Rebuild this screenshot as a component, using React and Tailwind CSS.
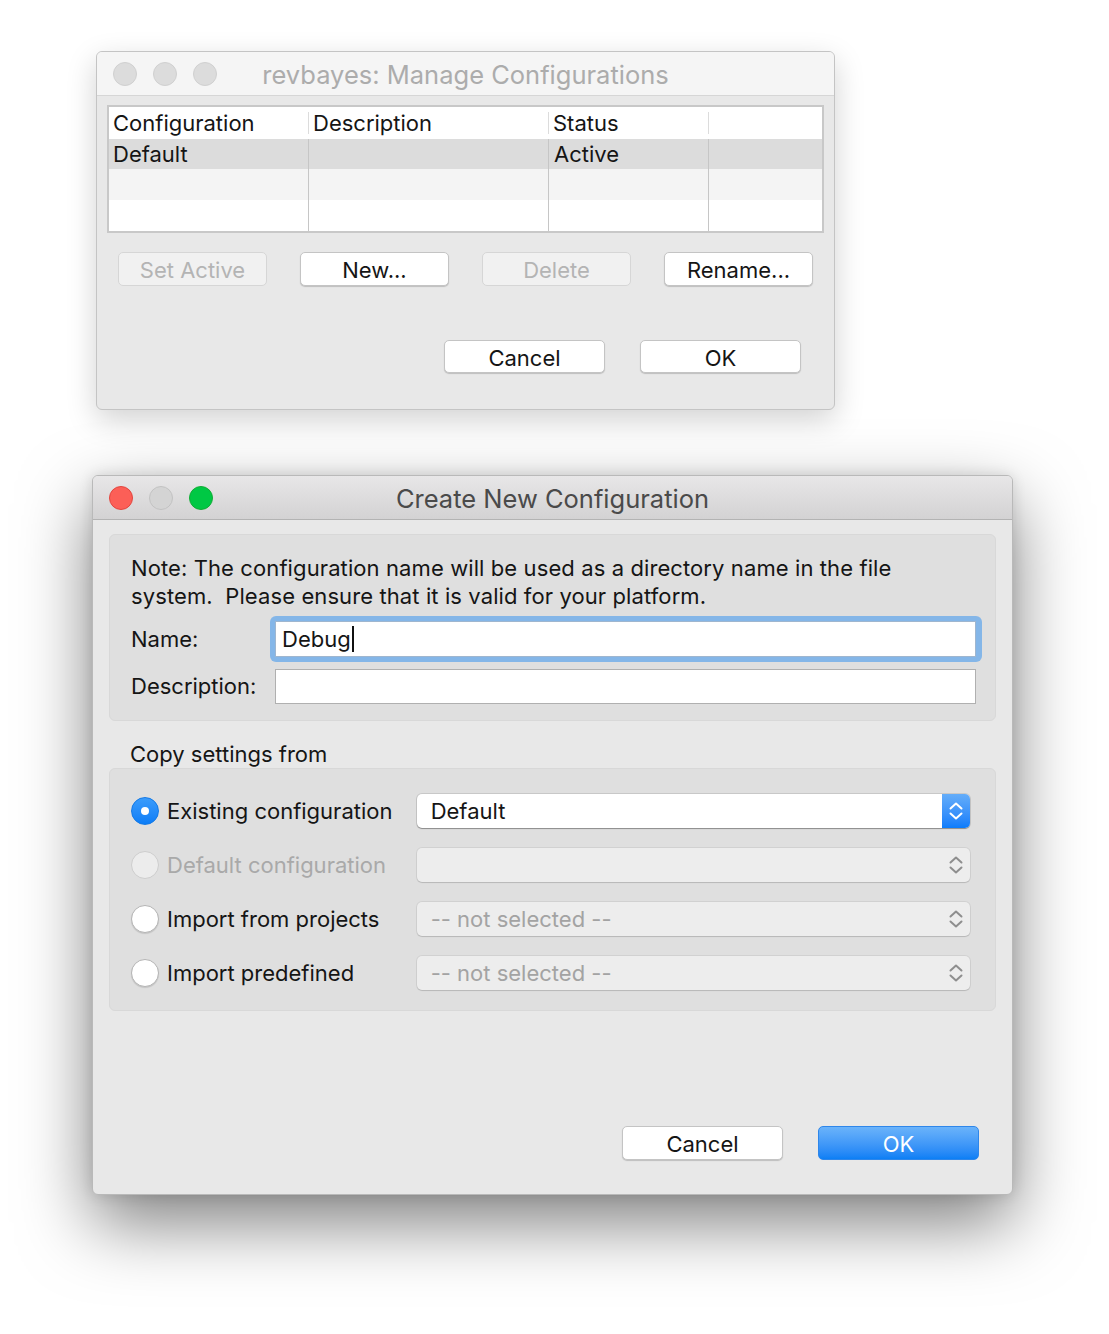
import React from "react";

const Chevrons = ({ color }) => (
  <svg width="14" height="20" viewBox="0 0 14 20" fill="none" stroke={color} strokeWidth="2" strokeLinecap="round" strokeLinejoin="round">
    <path d="M1.5 7.5 L7 2.5 L12.5 7.5" />
    <path d="M1.5 12.5 L7 17.5 L12.5 12.5" />
  </svg>
);

const Btn = ({ children, disabled, w = "w-[149px]", h = "h-[34px]" }) => (
  <div
    className={
      (disabled
        ? "bg-[#f1f1f1] text-[#b4b4b4] border-[#d6d6d6] "
        : "bg-white text-[#151515] border-[#c4c4c4] shadow-[0_1px_1px_rgba(0,0,0,0.18)] ") +
      w + " " + h +
      " flex items-center justify-center rounded-[5px] border text-[22px] leading-none pt-[2px]"
    }
  >
    {children}
  </div>
);

const Light = ({ cls }) => <div className={"w-[24px] h-[24px] rounded-full border " + cls} />;

const Radio = ({ state }) => {
  if (state === "on")
    return (
      <div className="w-[28px] h-[28px] rounded-full bg-gradient-to-b from-[#3a9cfb] to-[#0a7df7] border border-[#1379e6] flex items-center justify-center">
        <div className="w-[8px] h-[8px] rounded-full bg-white" />
      </div>
    );
  if (state === "disabled")
    return <div className="w-[28px] h-[28px] rounded-full bg-[#ececec] border border-[#cdcdcd]" />;
  return <div className="w-[28px] h-[28px] rounded-full bg-white border border-[#b4b4b4] shadow-[0_1px_1px_rgba(0,0,0,0.12)]" />;
};

const Select = ({ active, text }) =>
  active ? (
    <div className="w-[554px] h-[34px] flex rounded-[5px] bg-white shadow-[0_1px_1px_rgba(0,0,0,0.3),0_0_0_1px_rgba(0,0,0,0.1)]">
      <div className="flex-1 flex items-center pl-[14px] text-[22px] text-[#151515]">{text}</div>
      <div className="w-[28px] h-full rounded-r-[5px] bg-gradient-to-b from-[#64adf9] to-[#0a7cfb] flex items-center justify-center">
        <Chevrons color="#ffffff" />
      </div>
    </div>
  ) : (
    <div className="w-[554px] h-[34px] flex items-center rounded-[5px] bg-[#ededed] shadow-[0_1px_1px_rgba(0,0,0,0.12),0_0_0_1px_rgba(0,0,0,0.06)]">
      <div className="flex-1 pl-[14px] text-[22px] text-[#a3a3a3]">{text}</div>
      <div className="w-[28px] flex items-center justify-center">
        <Chevrons color="#8e8e8e" />
      </div>
    </div>
  );

export default function App() {
  const cols = ["w-[199px]", "w-[240px]", "w-[160px]", "flex-1"];
  return (
    <div className="w-[1109px] h-[1334px] bg-white pt-[51px] font-['Inter',sans-serif] text-[#151515] overflow-hidden">
      {/* Window 1 */}
      <div className="ml-[96px] w-[739px] h-[359px] rounded-[6px] border border-[#c4c4c4] bg-[#e8e8e8] shadow-[0_10px_30px_rgba(0,0,0,0.18)] overflow-hidden flex flex-col">
        <div className="h-[44px] shrink-0 bg-[#f5f5f5] border-b border-[#d6d6d6] relative flex items-center justify-center">
          <div className="absolute left-[16px] top-[10px] flex gap-[16px]">
            <Light cls="bg-[#dcdcdc] border-[#d0d0d0]" />
            <Light cls="bg-[#dcdcdc] border-[#d0d0d0]" />
            <Light cls="bg-[#dcdcdc] border-[#d0d0d0]" />
          </div>
          <div className="text-[25.5px] text-[#acacac] pt-[3px]">revbayes: Manage Configurations</div>
        </div>
        <div className="pt-[9px] px-[10px] flex flex-col">
          <div className="h-[128px] border-2 border-[#c8c8c8] bg-white flex flex-col">
            <div className="h-[32px] flex bg-white">
              {["Configuration", "Description", "Status", ""].map((t, i) => (
                <div key={i} className={cols[i] + " flex items-center pl-[4px] text-[22px] relative"}>
                  {i > 0 && <div className="absolute left-0 top-[5px] bottom-[5px] w-[1px] bg-[#dcdcdc]" />}
                  <span className={i > 0 ? "pl-[1px]" : ""}>{t}</span>
                </div>
              ))}
            </div>
            {[
              ["bg-[#dcdcdc]", "h-[30px]", ["Default", "", "Active", ""]],
              ["bg-[#f4f4f4]", "h-[31px]", ["", "", "", ""]],
              ["bg-white", "h-[31px]", ["", "", "", ""]],
            ].map(([bg, h, cells], r) => (
              <div key={r} className={"flex " + bg + " " + h}>
                {cells.map((t, i) => (
                  <div
                    key={i}
                    className={cols[i] + " flex items-center pl-[4px] text-[22px] " + (i > 0 ? "border-l border-[#c6c6c6] pl-[5px]" : "")}
                  >
                    {t}
                  </div>
                ))}
              </div>
            ))}
          </div>
          <div className="mt-[19px] pl-[11px] flex gap-[33px]">
            <Btn disabled>Set Active</Btn>
            <Btn>New...</Btn>
            <Btn disabled>Delete</Btn>
            <Btn>Rename...</Btn>
          </div>
          <div className="mt-[54px] pr-[23px] flex justify-end gap-[35px]">
            <Btn w="w-[161px]" h="h-[33px]">Cancel</Btn>
            <Btn w="w-[161px]" h="h-[33px]">OK</Btn>
          </div>
        </div>
      </div>

      {/* Window 2 */}
      <div className="ml-[92px] mt-[65px] w-[921px] h-[720px] rounded-[6px] border border-[#b9b9b9] bg-[#e8e8e8] shadow-[0_28px_70px_rgba(0,0,0,0.5),0_0_14px_rgba(0,0,0,0.12)] overflow-hidden flex flex-col">
        <div className="h-[44px] shrink-0 bg-gradient-to-b from-[#e8e7e8] to-[#d3d2d3] border-b border-[#b3b3b3] relative flex items-center justify-center">
          <div className="absolute left-[16px] top-[10px] flex gap-[16px]">
            <Light cls="bg-[#fc5f57] border-[#e2463f]" />
            <Light cls="bg-[#d4d4d4] border-[#c2c2c2]" />
            <Light cls="bg-[#00c844] border-[#12ac35]" />
          </div>
          <div className="text-[25.5px] text-[#4a4a4a] pt-[3px]">Create New Configuration</div>
        </div>
        <div className="px-[16px] pt-[14px] flex flex-col">
          <div className="h-[187px] rounded-[6px] bg-[#dfdfdf] border border-[#d8d8d8] pl-[21px] pr-[19px] pt-[19px]">
            <div className="text-[22px] leading-[28px] tracking-[0.1px]">
              Note: The configuration name will be used as a directory name in the file
              <br />
              system.&nbsp; Please ensure that it is valid for your platform.
            </div>
            <div className="mt-[6px] flex items-center h-[46px]">
              <div className="w-[144px] text-[22px]">Name:</div>
              <div className="flex-1 -ml-[5px] -mr-[6px] rounded-[6px] bg-[#84b6e8] pl-[5px] pr-[6px] py-[5px]">
                <div className="h-[36px] bg-white border border-[#9fb6cf] flex items-center pl-[6px] text-[22px]">
                  Debug<span className="inline-block w-[2px] h-[26px] bg-[#111] ml-[1px]" />
                </div>
              </div>
            </div>
            <div className="mt-[7px] flex items-center">
              <div className="w-[144px] text-[22px]">Description:</div>
              <div className="flex-1 h-[35px] bg-white border border-[#b0b0b0]" />
            </div>
          </div>
          <div className="mt-[20px] pl-[21px] text-[22px] leading-[26px]">Copy settings from</div>
          <div className="mt-[1px] h-[243px] rounded-[6px] bg-[#dfdfdf] border border-[#d8d8d8] pl-[21px] pr-[25px] pt-[25px] flex flex-col gap-[20px]">
            {[
              ["on", "Existing configuration", true, "Default"],
              ["disabled", "Default configuration", false, ""],
              ["off", "Import from projects", false, "-- not selected --"],
              ["off", "Import predefined", false, "-- not selected --"],
            ].map(([st, label, active, val], i) => (
              <div key={i} className="flex items-center h-[34px]">
                <div className="w-[286px] flex items-center gap-[8px]">
                  <Radio state={st} />
                  <span className={"text-[22px] " + (st === "disabled" ? "text-[#a9a9a9]" : "text-[#151515]")}>{label}</span>
                </div>
                <Select active={active} text={val} />
              </div>
            ))}
          </div>
          <div className="mt-[115px] pr-[17px] flex justify-end gap-[35px]">
            <Btn w="w-[161px]" h="h-[34px]">Cancel</Btn>
            <div className="w-[161px] h-[34px] rounded-[5px] bg-gradient-to-b from-[#6ab3fa] to-[#0a7ff5] border border-[#2e86ea] text-white text-[22px] leading-none pt-[2px] flex items-center justify-center">
              OK
            </div>
          </div>
        </div>
      </div>
    </div>
  );
}
